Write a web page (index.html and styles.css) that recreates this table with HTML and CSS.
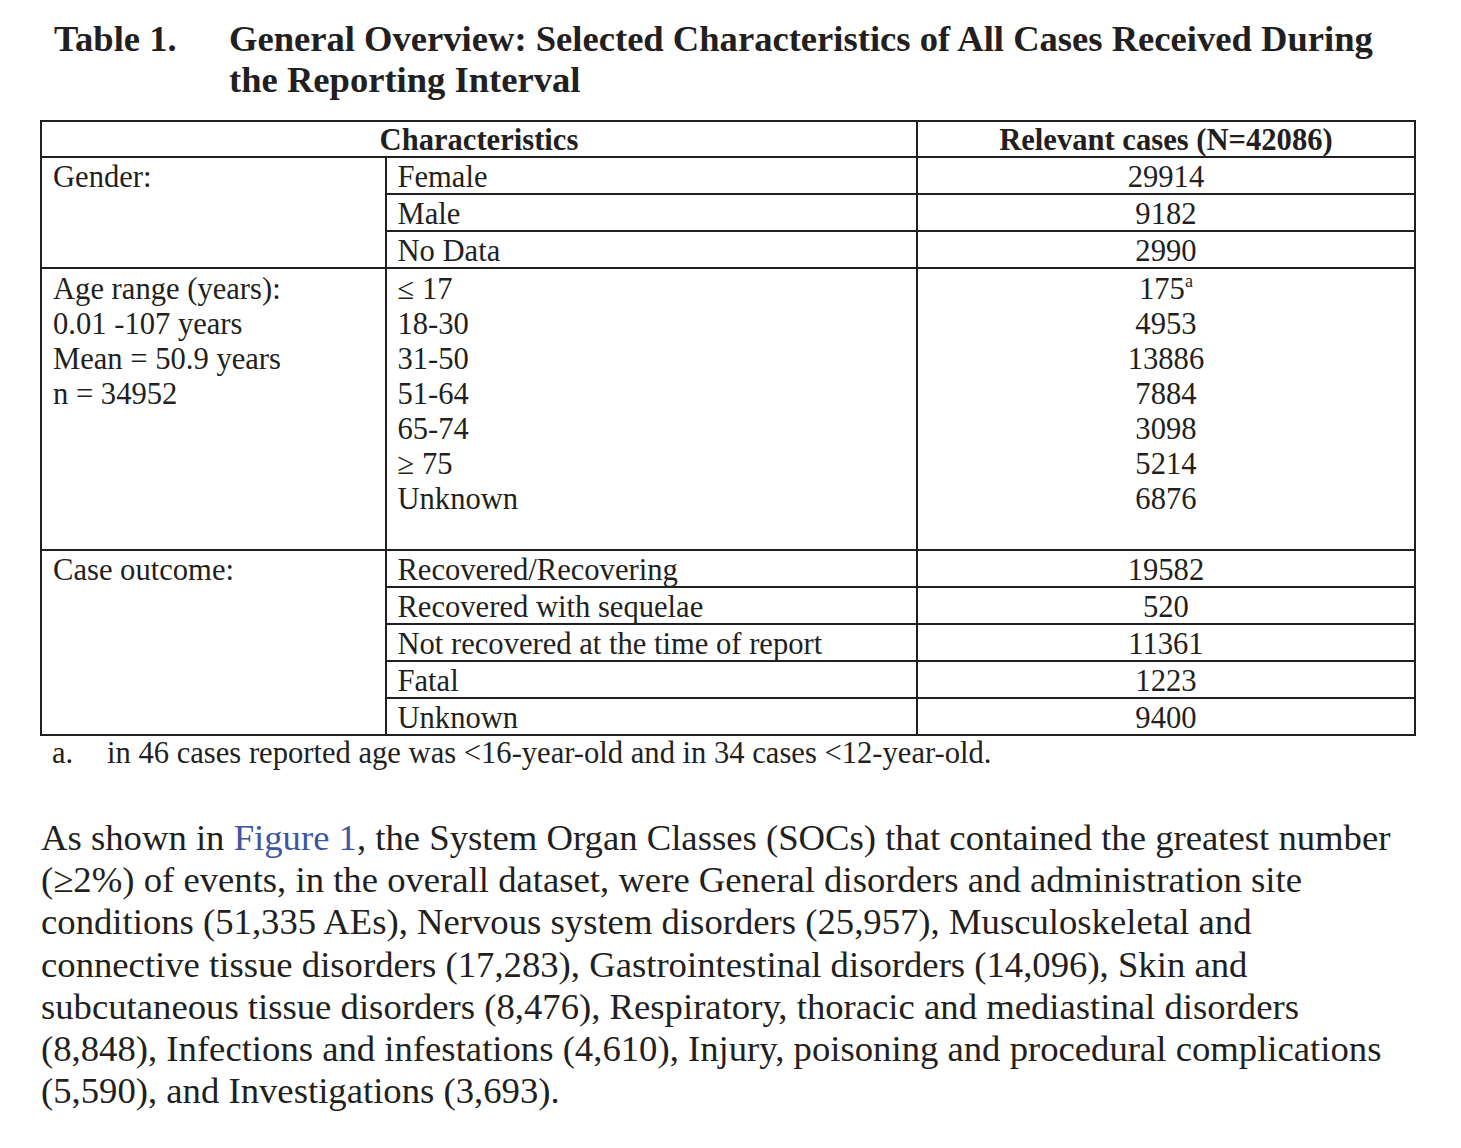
FILE: index.html
```html
<!DOCTYPE html>
<html>
<head>
<meta charset="utf-8">
<link rel="stylesheet" href="styles.css">
</head>
<body>
<div class="page">
  <div class="caption">
    <div class="cap-label">Table 1.</div>
    <div class="cap-title">General Overview: Selected Characteristics of All Cases Received During the Reporting Interval</div>
  </div>
  <table class="data">
    <colgroup>
      <col class="c1"><col class="c2"><col class="c3">
    </colgroup>
    <thead>
      <tr class="r">
        <th colspan="2">Characteristics</th>
        <th>Relevant cases (N=42086)</th>
      </tr>
    </thead>
    <tbody>
      <tr class="r">
        <td rowspan="3" class="group">Gender:</td>
        <td class="lbl">Female</td>
        <td class="num">29914</td>
      </tr>
      <tr class="r"><td class="lbl">Male</td><td class="num">9182</td></tr>
      <tr class="r"><td class="lbl">No Data</td><td class="num">2990</td></tr>
      <tr class="age">
        <td class="group">
          <div class="ln">Age range (years):</div>
          <div class="ln">0.01 -107 years</div>
          <div class="ln">Mean = 50.9 years</div>
          <div class="ln">n = 34952</div>
        </td>
        <td class="lbl">
          <div class="ln"><span class="rel">≤</span> 17</div>
          <div class="ln">18-30</div>
          <div class="ln">31-50</div>
          <div class="ln">51-64</div>
          <div class="ln">65-74</div>
          <div class="ln"><span class="rel">≥</span> 75</div>
          <div class="ln">Unknown</div>
        </td>
        <td class="num">
          <div class="ln">175<sup class="fn">a</sup></div>
          <div class="ln">4953</div>
          <div class="ln">13886</div>
          <div class="ln">7884</div>
          <div class="ln">3098</div>
          <div class="ln">5214</div>
          <div class="ln">6876</div>
        </td>
      </tr>
      <tr class="r">
        <td rowspan="5" class="group">Case outcome:</td>
        <td class="lbl">Recovered/Recovering</td>
        <td class="num">19582</td>
      </tr>
      <tr class="r"><td class="lbl">Recovered with sequelae</td><td class="num">520</td></tr>
      <tr class="r"><td class="lbl">Not recovered at the time of report</td><td class="num">11361</td></tr>
      <tr class="r"><td class="lbl">Fatal</td><td class="num">1223</td></tr>
      <tr class="r"><td class="lbl">Unknown</td><td class="num">9400</td></tr>
    </tbody>
  </table>
  <div class="footnote">
    <span class="fn-mark">a.</span>
    <span>in 46 cases reported age was &lt;16-year-old and in 34 cases &lt;12-year-old.</span>
  </div>
  <p class="body-text">As shown in <span class="ref">Figure 1</span>, the System Organ Classes (SOCs) that contained the greatest number (≥2%) of events, in the overall dataset, were General disorders and administration site conditions (51,335 AEs), Nervous system disorders (25,957), Musculoskeletal and connective tissue disorders (17,283), Gastrointestinal disorders (14,096), Skin and subcutaneous tissue disorders (8,476), Respiratory, thoracic and mediastinal disorders (8,848), Infections and infestations (4,610), Injury, poisoning and procedural complications (5,590), and Investigations (3,693).</p>
</div>
</body>
</html>
```

FILE: styles.css
```css
html, body {
  margin: 0;
  padding: 0;
  background: #ffffff;
}

body {
  font-family: "Liberation Serif", "Times New Roman", serif;
  color: #231f20;
}

.page {
  padding: 18px 0 0 40px;
}

.caption {
  display: flex;
  padding-left: 14px;
  font-size: 36.6px;
  line-height: 41px;
  font-weight: bold;
}

.cap-label {
  flex: 0 0 175px;
}

.cap-title {
  width: 1180px;
}

.data {
  margin-top: 20px;
  border-collapse: collapse;
  width: 1376px;
  font-size: 30.6px;
}

.c1 { width: 346px; }
.c2 { width: 531px; }
.c3 { width: 499px; }

.data th,
.data td {
  border: 2px solid #231f20;
  padding: 0;
  vertical-align: top;
  line-height: 32px;
}

.data th {
  font-weight: bold;
  text-align: center;
  padding-top: 2px;
}

.data tr.r {
  height: 35.45px;
}

.data tr.age td {
  line-height: 35px;
}

.data tr.age {
  height: 282px;
}

.data td.group {
  padding: 3px 0 0 11px;
}

.data td.lbl {
  padding: 3px 0 0 10px;
}

.data td.num {
  padding-top: 3px;
  text-align: center;
}

.fn {
  font-size: 18px;
  line-height: 0;
  vertical-align: 12px;
}

.footnote {
  display: flex;
  font-size: 30.6px;
  line-height: 35px;
  padding-left: 12px;
  margin-top: 0;
}

.fn-mark {
  flex: 0 0 55px;
}

.body-text {
  margin: 46px 0 0 1px;
  width: 1362px;
  font-size: 36.7px;
  line-height: 42.2px;
}

.ref {
  color: #3d55a5;
}
```
